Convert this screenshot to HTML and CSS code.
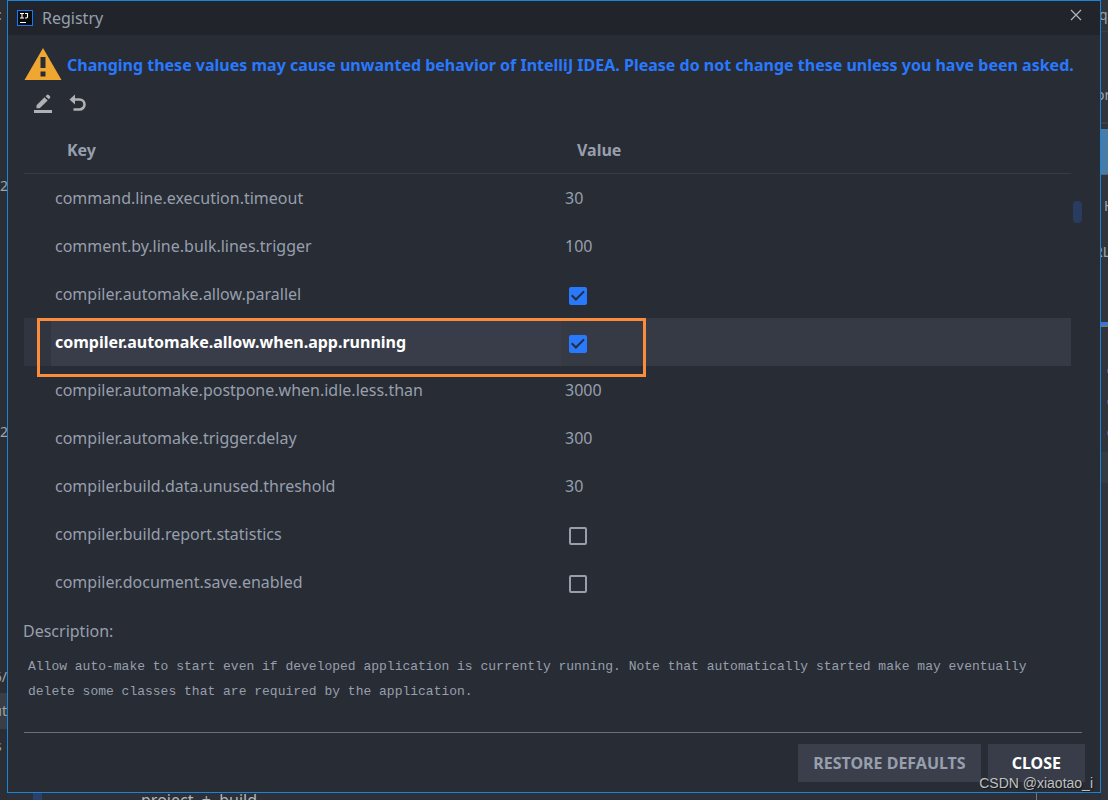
FILE: index.html
```html
<!DOCTYPE html>
<html lang="en">
<head>
<meta charset="utf-8">
<title>Registry</title>
<link rel="stylesheet" href="styles.css">
</head>
<body>
<div class="desktop">
  <div class="editor" aria-hidden="true">
    <div class="gutter">
      <span class="frag f-colon">:</span>
      <span class="frag f-two-a">:2</span>
      <span class="frag f-two-b">2</span>
      <span class="frag f-six">6/</span>
      <span class="frag f-ut">ut</span>
      <span class="frag f-s">s</span>
    </div>
    <div class="side">
      <span class="line l-one"></span>
      <span class="line l-two"></span>
      <span class="frag s-q">q</span>
      <span class="frag s-or">or</span>
      <span class="block"></span>
      <span class="frag s-h">H</span>
      <span class="frag s-rl">RL</span>
      <span class="tabline"></span>
      <span class="mark m-one"></span>
      <span class="mark m-two"></span>
      <span class="mark m-three"></span>
      <span class="tint"></span>
    </div>
    <span class="stripe"></span>
    <span class="crumbs">project &nbsp;+ &nbsp;build</span>
    <span class="divider"></span>
  </div>

  <main class="dialog">
    <header class="titlebar">
      <svg class="app-icon" viewBox="0 0 16 16" width="16" height="16">
        <rect x=".5" y=".5" width="15" height="15" fill="#0b0b0b" stroke="#1677ff"/>
        <path d="M3 3.500h4M5 3.500v4.500M3 8h4M8 3.500h2.500v3.500q0 1.200-2.500 1" fill="none" stroke="#fff" stroke-width="1.100"/>
        <path d="M3 12.500h6" stroke="#fff"/>
      </svg>
      <h1 class="title">Registry</h1>
      <button class="close-x" aria-label="Close window">
        <svg viewBox="0 0 12 12" width="12" height="12"><path d="M1 1l10 10M11 1L1 11" stroke="#b4b6ba" stroke-width="1.200"/></svg>
      </button>
    </header>

    <div class="content">
      <div class="warning">
        <svg viewBox="0 0 38 32" width="38" height="32">
          <path d="M19 0L37.500 32H.5z" fill="#f0a732"/>
          <path d="M16.500 9h5v11h-5zM16.500 23.500h5v5h-5z" fill="#282c34"/>
        </svg>
        <p class="warning-text">Changing these values may cause unwanted behavior of IntelliJ IDEA. Please do not change these unless you have been asked.</p>
      </div>

      <div class="toolbar">
        <button class="tool" aria-label="Edit value">
          <svg viewBox="0 0 20 20" width="20" height="20" fill="#afb1b3"><path d="M1 16h18v3H1z"/><path d="M3.500 11.200L11.500 3.200l3.200 3.200L6.700 14.300H3.500zM12.500 2.200l1.300-1.300q1-.8 2 .1l1.200 1.300q.8.900 0 1.700l-1.300 1.300z"/></svg>
        </button>
        <button class="tool" aria-label="Revert value">
          <svg viewBox="0 0 20 20" width="20" height="20"><path d="M6 5.500h5.500a5 5 0 0 1 0 10H5.500" fill="none" stroke="#afb1b3" stroke-width="2.600"/><path d="M1.500 5.500L7 .5v10z" fill="#afb1b3"/></svg>
        </button>
      </div>

      <div class="table-pane">
        <table class="registry">
          <thead>
            <tr><th class="key">Key</th><th class="value">Value</th></tr>
          </thead>
          <tbody>
            <tr><td class="key">command.line.execution.timeout</td><td class="value">30</td></tr>
            <tr><td class="key">comment.by.line.bulk.lines.trigger</td><td class="value">100</td></tr>
            <tr><td class="key"><label for="parallel">compiler.automake.allow.parallel</label></td><td class="value"><input class="check" type="checkbox" id="parallel" checked></td></tr>
            <tr class="selected"><td class="key"><label for="running">compiler.automake.allow.when.app.running</label><span class="highlight"></span></td><td class="value"><input class="check" type="checkbox" id="running" checked></td></tr>
            <tr><td class="key">compiler.automake.postpone.when.idle.less.than</td><td class="value">3000</td></tr>
            <tr><td class="key">compiler.automake.trigger.delay</td><td class="value">300</td></tr>
            <tr><td class="key">compiler.build.data.unused.threshold</td><td class="value">30</td></tr>
            <tr><td class="key"><label for="statistics">compiler.build.report.statistics</label></td><td class="value"><input class="check" type="checkbox" id="statistics"></td></tr>
            <tr><td class="key"><label for="save">compiler.document.save.enabled</label></td><td class="value"><input class="check" type="checkbox" id="save"></td></tr>
          </tbody>
        </table>
        <div class="scrollbar"><div class="thumb"></div></div>
      </div>

      <section class="description">
        <h2 class="description-title">Description:</h2>
        <p class="description-text">Allow auto-make to start even if developed application is currently running. Note that automatically started make may eventually delete some classes that are required by the application.</p>
      </section>

      <footer class="actions">
        <button class="button">RESTORE DEFAULTS</button>
        <button class="button primary">CLOSE</button>
      </footer>
    </div>
  </main>
  <span class="watermark">CSDN @xiaotao_i</span>
</div>
</body>
</html>
```
FILE: styles.css
```css
* { box-sizing: border-box; }

body {
  margin: 0;
  background: #2d3038;
  color: #979fad;
  font: 16px/24px "Noto Sans", "Open Sans", sans-serif;
}

h1, h2, p { margin: 0; font-size: inherit; font-weight: normal; }
button { border: 0; padding: 0; background: none; color: inherit; font: inherit; cursor: pointer; }
svg { display: block; }

.desktop { position: relative; min-height: 100vh; overflow: hidden; padding: 0 7px 7px; }

/* Editor window behind the dialog */
.editor { position: absolute; inset: 0; }
.gutter { position: absolute; inset: 0 auto 0 0; width: 7px; overflow: hidden; background: #2b2e35; }
.side { position: absolute; inset: 0 0 0 auto; width: 7px; overflow: hidden; background: #31343b; }
.frag { position: absolute; font-size: 14px; line-height: 20px; color: #a0a4aa; }
.f-colon { top: 5px; left: -2px; }
.f-two-a { top: 176px; right: -1px; }
.f-two-b { top: 422px; right: -1px; }
.f-six { top: 667px; right: 0; }
.f-ut { top: 693px; right: 0; padding: 8px 0; background: #3a3e47; line-height: 20px; }
.f-s { top: 736px; left: -5px; }
.s-q { top: 5px; left: -2px; }
.s-or { top: 85px; left: -5px; }
.s-h { top: 196px; left: 3px; }
.s-rl { top: 242px; left: -7px; }
.line { position: absolute; left: 0; right: 0; height: 1px; background: #3b3e46; }
.l-one { top: 31px; }
.l-two { top: 122px; height: 2px; }
.block { position: absolute; top: 129px; left: 0; right: 0; height: 46px; background: #477ba8; border-bottom: 1px solid #5b6470; }
.tabline { position: absolute; top: 322px; left: 0; right: 0; height: 5px; background: #3674e0; border-bottom: 2px solid #70757e; }
.mark { position: absolute; right: 0; width: 1px; height: 4px; background: #3c55b0; }
.m-one { top: 369px; }
.m-two { top: 400px; }
.m-three { top: 431px; }
.tint { position: absolute; top: 452px; left: 0; right: 0; height: 31px; background: #343c42; }
.stripe { position: absolute; left: 33px; bottom: 0; width: 9px; height: 7px; background: #2b3f6b; }
.crumbs { position: absolute; left: 141px; bottom: -12px; color: #b5b7ba; font-size: 16px; line-height: 24px; }
.divider { position: absolute; right: 71px; bottom: 0; width: 1px; height: 7px; background: #74777d; }

/* Dialog */
.dialog { position: relative; border: 1px solid #1a84d8; background: #282c34; }
.titlebar { display: flex; align-items: center; gap: 9px; height: 34px; padding: 0 18px 0 9px; background: #21252b; }
.title { flex: 1; }
.close-x { padding-bottom: 6px; }
.content { padding: 13px 15px 10px 16px; }

.warning { display: flex; align-items: center; gap: 5px; min-height: 32px; }
.warning svg { flex: none; }
.warning-text { padding-top: 2px; color: #2979ff; font-weight: bold; white-space: nowrap; }

.toolbar { display: flex; gap: 15px; padding: 14px 0 0 9px; }

.table-pane { display: flex; margin: 12px 0 0; }
.registry { flex: 1; border-spacing: 0; table-layout: fixed; }
.registry th { height: 48px; padding: 0 0 0 16px; border-bottom: 1px solid #363b47; text-align: left; }
.registry td { height: 48px; padding: 0 0 0 4px; }
.registry .key { width: 537px; }
.registry th.key { padding-left: 43px; }
.registry td.key { padding-left: 31px; }
.selected { background: #353a45; color: #fff; font-weight: bold; }
.selected .key { position: relative; background: linear-gradient(to right, #31353f 27px, #383d49 27px); }
.highlight { position: absolute; z-index: 1; top: 0; left: 13px; width: 609px; height: 59px; border: 3px solid #fb8c3c; pointer-events: none; }

.check { appearance: none; display: grid; place-items: center; width: 18px; height: 18px; margin: 4px 0 0 4px; border: 2px solid #979fad; border-radius: 2px; }
.check:checked { border-color: #2979ff; background: #2979ff; }
.check:checked::after { content: ""; width: 14px; height: 14px; background: #282c34; clip-path: polygon(0 50%, 10% 40%, 35% 65%, 88% 12%, 98% 22%, 35% 85%); }

.scrollbar { width: 14px; padding: 75px 3px 0 2px; }
.thumb { height: 22px; border-radius: 4px; background: #293c60; }

.description { margin-right: 3px; padding-top: 13px; }
.description-title { margin-left: -1px; }
.description-text { padding: 11px 12px 28px 4px; border-bottom: 1px solid #6b7080; font: 13px/25px "Liberation Mono", monospace; }

.actions { display: flex; justify-content: flex-end; gap: 7px; padding-top: 11px; }
.button { height: 38px; padding: 0 15px; background: #3a3f4b; font-weight: bold; }
.primary { padding: 0 24px; background: #383d49; color: #fff; }

.watermark { position: absolute; right: 15px; bottom: 7px; color: #bfc1c4; font: 14px/20px "Liberation Sans", sans-serif; text-shadow: 1px 1px 1px #15171b; }
```
